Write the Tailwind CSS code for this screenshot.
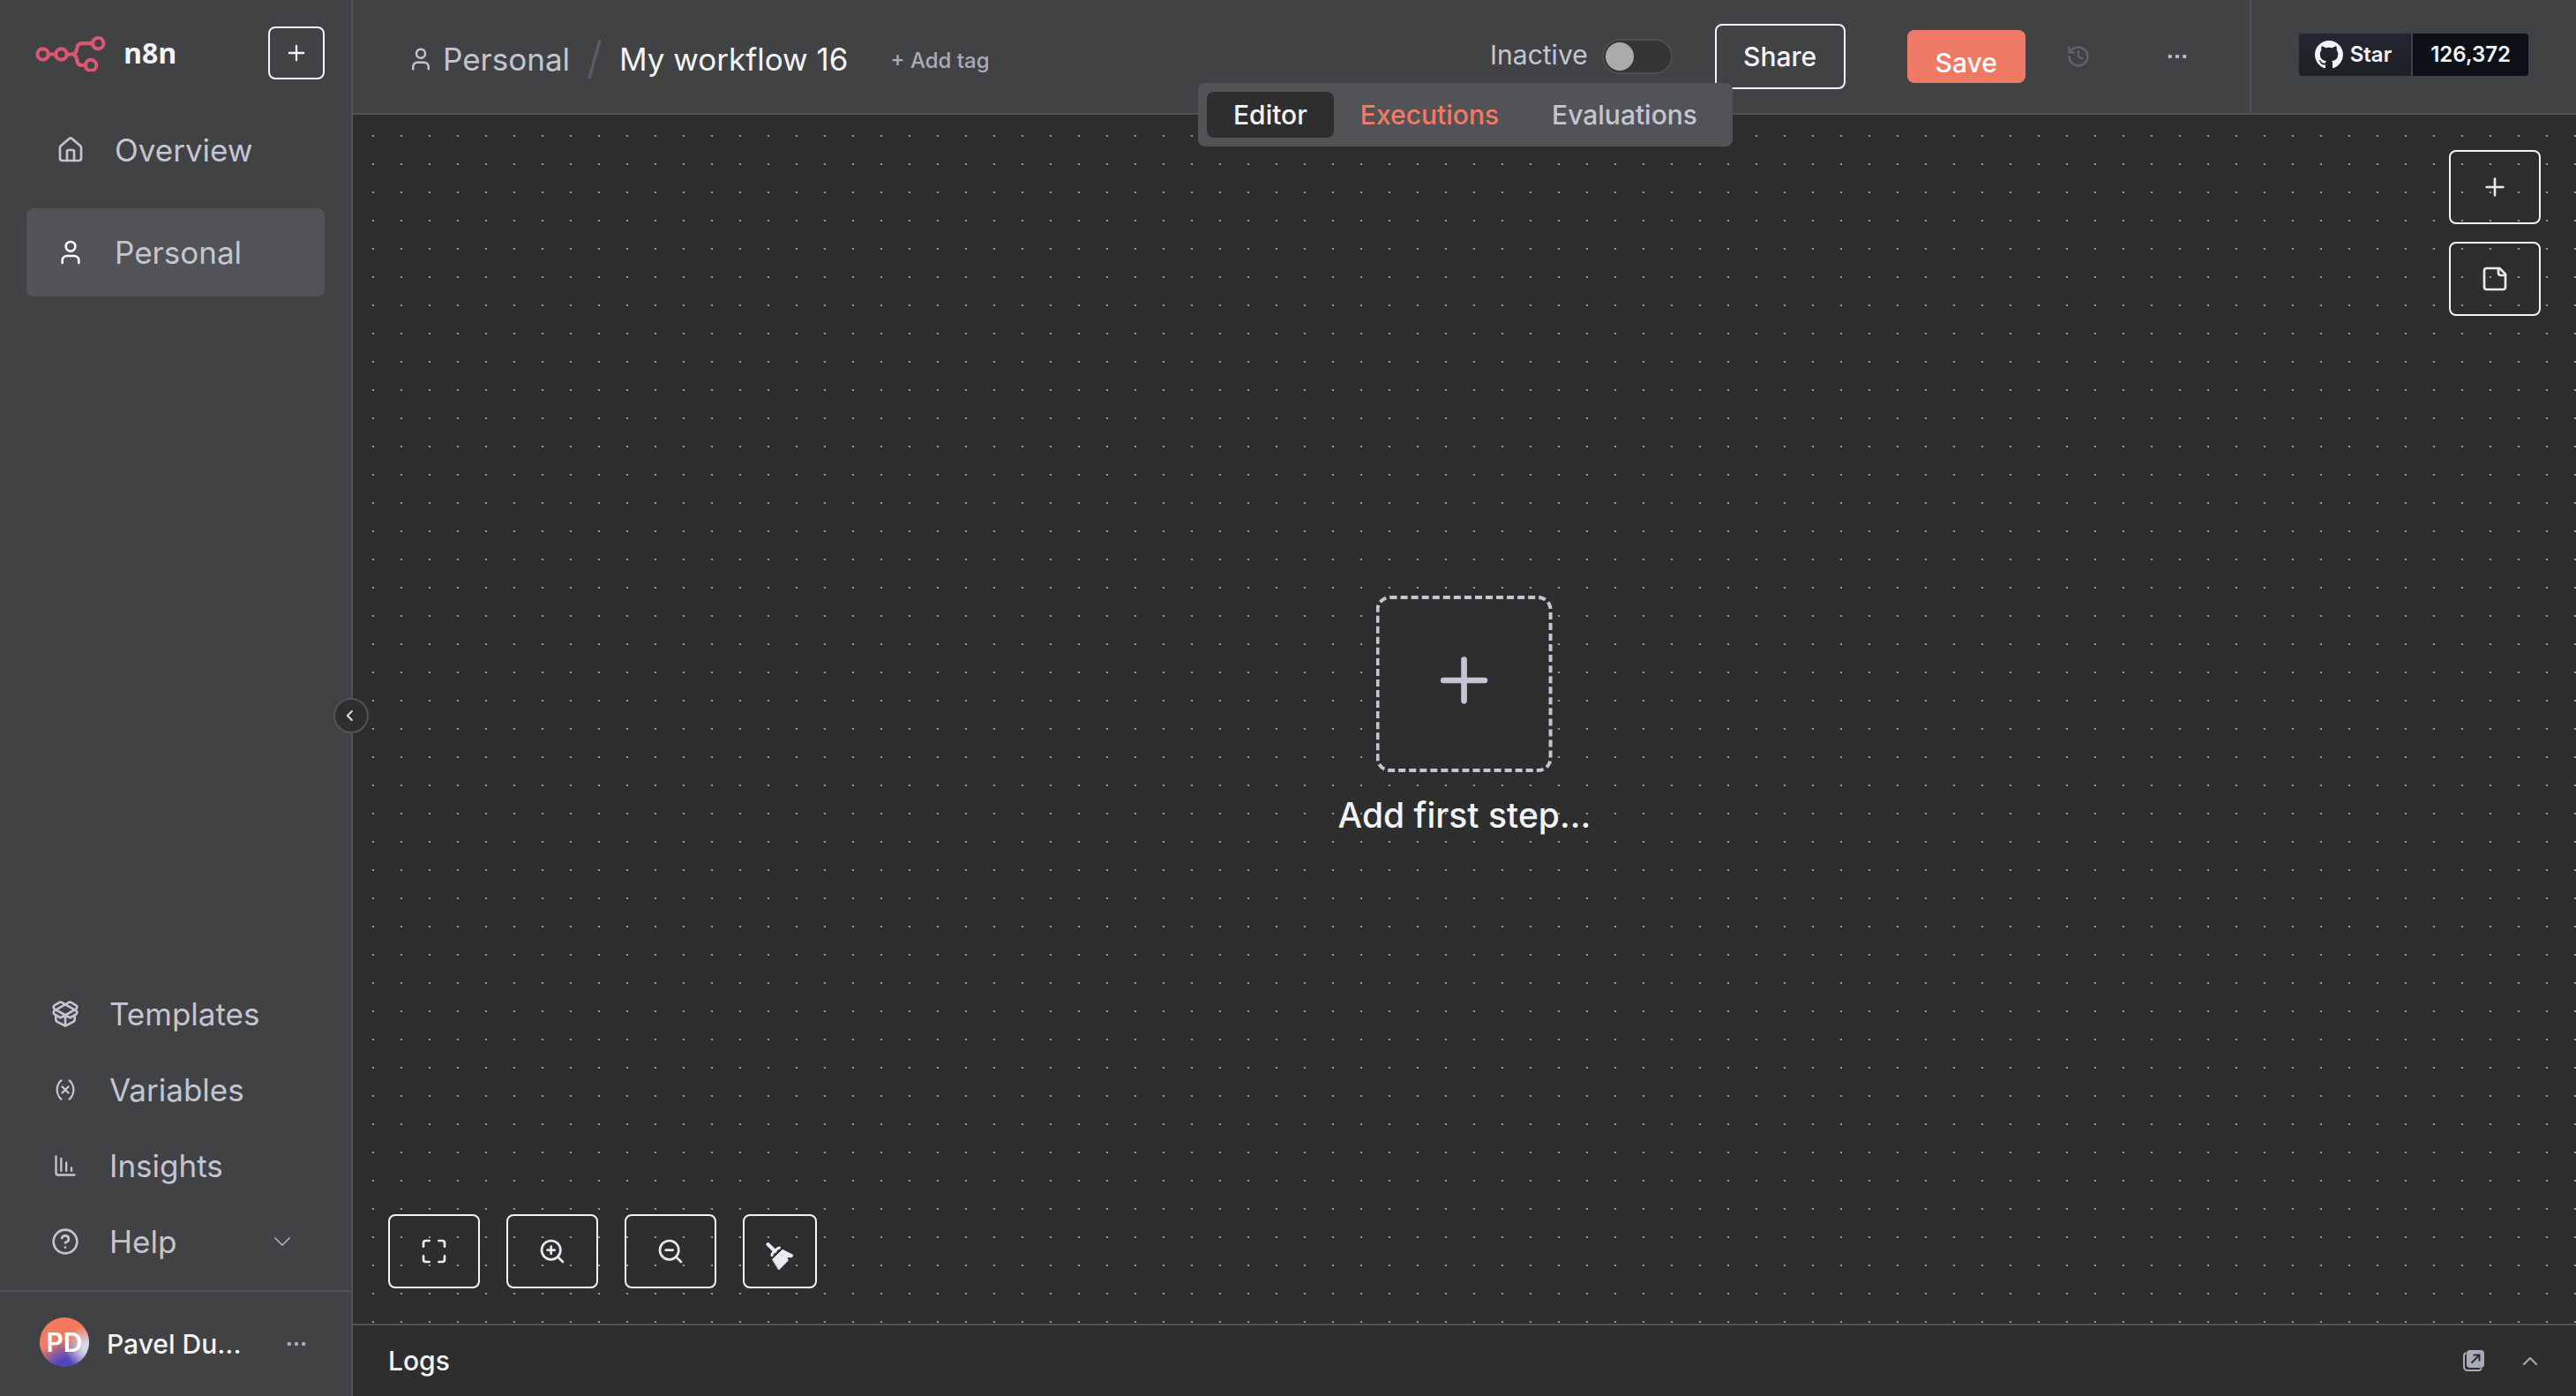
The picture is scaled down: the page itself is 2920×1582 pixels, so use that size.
<!DOCTYPE html>
<html lang="en">
<head>
    <meta charset="UTF-8">
    <meta name="viewport" content="width=device-width, initial-scale=1.0">
    <title>My workflow 16 - n8n</title>
    <script src="https://cdn.jsdelivr.net/npm/@tailwindcss/browser@4"></script>
</head>
<body class="bg-[#2e2e2e] min-h-screen flex font-['Inter',sans-serif] text-[#c3c6d2]">

    <!-- Sidebar -->
    <aside class="relative w-[400px] shrink-0 flex flex-col bg-[#414244] border-r-2 border-[#525356]">
        <div class="flex items-center justify-between pt-[30px] pl-10 pr-[30px]">
            <a href="#" class="flex items-center gap-5">
                <svg class="w-20 h-[42px]" viewBox="0 0 80 42" fill="none" stroke="#dc5674" stroke-width="4.2">
                    <circle cx="8.6" cy="22.5" r="6.2"/>
                    <circle cx="29.5" cy="22.5" r="6.2"/>
                    <circle cx="71.2" cy="10.2" r="6.2"/>
                    <circle cx="63" cy="35" r="6.2"/>
                    <path d="M14.8 22.5h8.5M35.7 22.5h5.8c3.5 0 4.8-2.5 5.3-5l.6-2.6c.6-2.7 2.3-4.7 5.6-4.7H65M41.5 22.5c3.5 0 4.8 2.5 5.3 5l.6 2.7c.6 2.8 2.4 4.8 5.6 4.8h4"/>
                </svg>
                <span class="font-['Open_Sans',sans-serif] font-bold text-[32px] leading-10 text-[#f2f4f8]">n8n</span>
            </a>
            <button type="button" aria-label="Add" class="w-16 h-[60px] flex items-center justify-center rounded-lg border-2 border-[#f2f4f8] text-[#f2f4f8]">
                <svg class="size-7" viewBox="0 0 24 24" fill="none" stroke="currentColor" stroke-width="2" stroke-linecap="round"><path d="M5 12h14M12 5v14"/></svg>
            </button>
        </div>

        <nav class="mt-[30px] px-[30px] flex flex-col gap-4 text-[35px]">
            <a href="#" class="h-[100px] flex items-center gap-[34px] pl-[34px] rounded-lg">
                <svg class="size-8" viewBox="0 0 24 24" fill="none" stroke="currentColor" stroke-width="2" stroke-linecap="round" stroke-linejoin="round"><path d="M15 21v-8a1 1 0 0 0-1-1h-4a1 1 0 0 0-1 1v8"/><path d="M3 10a2 2 0 0 1 .709-1.528l7-5.999a2 2 0 0 1 2.582 0l7 5.999A2 2 0 0 1 21 10v9a2 2 0 0 1-2 2H5a2 2 0 0 1-2-2z"/></svg>
                Overview
            </a>
            <a href="#" class="h-[100px] flex items-center gap-[34px] pl-[34px] rounded-lg bg-[#525356]">
                <svg class="size-8 text-white" viewBox="0 0 24 24" fill="none" stroke="currentColor" stroke-width="2" stroke-linecap="round" stroke-linejoin="round"><path d="M19 21v-2a4 4 0 0 0-4-4H9a4 4 0 0 0-4 4v2"/><circle cx="12" cy="7" r="4"/></svg>
                Personal
            </a>
        </nav>

        <nav class="mt-auto pb-3 pl-[58px] pr-[68px] flex flex-col text-[35px]">
            <a href="#" class="h-[86px] flex items-center gap-[34px]">
                <svg class="size-8" viewBox="0 0 24 24" fill="none" stroke="currentColor" stroke-width="2" stroke-linecap="round" stroke-linejoin="round"><path d="M12 22v-9"/><path d="M15.17 2.21a1.67 1.67 0 0 1 1.63 0L21 4.57a1.93 1.93 0 0 1 0 3.36L8.82 14.79a1.655 1.655 0 0 1-1.64 0L3 12.43a1.93 1.93 0 0 1 0-3.36z"/><path d="M20 13v3.87a2.06 2.06 0 0 1-1.11 1.83l-6 3.08a1.93 1.93 0 0 1-1.78 0l-6-3.08A2.06 2.06 0 0 1 4 16.87V13"/><path d="M21 12.43a1.93 1.93 0 0 0 0-3.36L8.83 2.2a1.64 1.64 0 0 0-1.63 0L3 4.57a1.93 1.93 0 0 0 0 3.36l12.18 6.86a1.636 1.636 0 0 0 1.63 0z"/></svg>
                Templates
            </a>
            <a href="#" class="h-[86px] flex items-center gap-[34px]">
                <span class="w-8 flex justify-center"><svg class="size-7" viewBox="0 0 24 24" fill="none" stroke="currentColor" stroke-width="2" stroke-linecap="round" stroke-linejoin="round"><path d="M8 21s-4-3-4-9 4-9 4-9M16 3s4 3 4 9-4 9-4 9M15 9l-6 6M9 9l6 6"/></svg></span>
                Variables
            </a>
            <a href="#" class="h-[86px] flex items-center gap-[34px]">
                <span class="w-8 flex justify-center"><svg class="size-7" viewBox="0 0 24 24" fill="none" stroke="currentColor" stroke-width="2" stroke-linecap="round" stroke-linejoin="round"><path d="M13 17V9M18 17v-3M3 3v16a2 2 0 0 0 2 2h16M8 17V5"/></svg></span>
                Insights
            </a>
            <a href="#" class="h-[86px] flex items-center gap-[34px]">
                <svg class="size-8" viewBox="0 0 24 24" fill="none" stroke="currentColor" stroke-width="2" stroke-linecap="round" stroke-linejoin="round"><circle cx="12" cy="12" r="10"/><path d="M9.09 9a3 3 0 0 1 5.83 1c0 2-3 3-3 3M12 17h.01"/></svg>
                Help
                <svg class="w-5 h-3 ml-auto" viewBox="0 0 20 12" fill="none" stroke="currentColor" stroke-width="1.3"><path d="M1.5 1.5 10 10l8.5-8.5"/></svg>
            </a>
        </nav>

        <div class="h-[120px] flex items-center pl-[45px] pr-12 border-t-2 border-[#525356]">
            <span class="size-14 mb-1 rounded-full flex items-center justify-center text-[30px] font-semibold text-white bg-[radial-gradient(circle_at_98%_62%,#d3dbee_8%,transparent_40%),radial-gradient(circle_at_55%_110%,#5146bd_20%,transparent_54%),linear-gradient(160deg,#f47a5f_45%,#9a6fa8_95%)]">PD</span>
            <span class="ml-5 text-[30px] font-medium text-[#f2f4f8]">Pavel Du...</span>
            <button type="button" aria-label="User menu" class="ml-auto text-[#a8acb9]">
                <svg class="size-7" viewBox="0 0 24 24" fill="currentColor"><circle cx="5" cy="12" r="2"/><circle cx="12" cy="12" r="2"/><circle cx="19" cy="12" r="2"/></svg>
            </button>
        </div>

        <!-- Collapse handle sits over the sidebar border -->
        <button type="button" aria-label="Collapse sidebar" class="absolute z-10 -right-5 top-[791px] size-10 flex items-center justify-center rounded-full bg-[#2e2e2e] border-2 border-[#525356] text-[#d9dbe4]">
            <svg class="size-5" viewBox="0 0 24 24" fill="none" stroke="currentColor" stroke-width="2.5" stroke-linecap="round" stroke-linejoin="round"><path d="m13 18-6-6 6-6"/></svg>
        </button>
    </aside>

    <div class="flex-1 min-w-0 flex flex-col">
        <!-- Header -->
        <header class="relative h-[130px] shrink-0 flex bg-[#414244] border-b-2 border-[#525356]">
            <div class="flex items-center pl-[62px] pt-1.5 text-[35px]">
                <a href="#" class="flex items-center gap-[10px]">
                    <svg class="size-[30px]" viewBox="0 0 24 24" fill="none" stroke="currentColor" stroke-width="2" stroke-linecap="round" stroke-linejoin="round"><path d="M19 21v-2a4 4 0 0 0-4-4H9a4 4 0 0 0-4 4v2"/><circle cx="12" cy="7" r="4"/></svg>
                    Personal
                </a>
                <svg class="w-4 h-11 ml-5 mr-5" viewBox="0 0 16 44" fill="none" stroke="#5a5b5e" stroke-width="3.5"><path d="M14 0 2 44"/></svg>
                <span class="text-[#f2f4f8]">My workflow 16</span>
                <button type="button" class="ml-12 pt-1 text-2xl font-medium text-[#a8acb9]">+ Add tag</button>
            </div>

            <div class="ml-auto flex items-center pr-[68px] text-[30px]">
                <label for="active" class="pb-1">Inactive</label>
                <input id="active" type="checkbox" role="switch" class="appearance-none ml-4 w-20 h-10 rounded-full bg-[#353535] border-2 border-[#4c4d4f] before:block before:size-8 before:m-[2px] before:rounded-full before:bg-[#aaabad]">
                <button type="button" class="ml-12 w-[148px] h-[74px] rounded-lg border-2 border-[#f2f4f8] font-medium text-[#f2f4f8]">Share</button>
                <button type="button" class="ml-[70px] w-[134px] h-[60px] pt-3.5 rounded-lg bg-[#ee7964] font-medium text-white">Save</button>
                <button type="button" aria-label="History" disabled class="ml-[46px] text-[#626366]">
                    <svg class="size-7" viewBox="0 0 24 24" fill="none" stroke="currentColor" stroke-width="2" stroke-linecap="round" stroke-linejoin="round"><path d="M3 12a9 9 0 1 0 9-9 9.75 9.75 0 0 0-6.74 2.74L3 8"/><path d="M3 3v5h5M12 7v5l4 2"/></svg>
                </button>
                <button type="button" aria-label="More" class="ml-[84px] text-[#b4b7c6]">
                    <svg class="size-7" viewBox="0 0 24 24" fill="currentColor"><circle cx="5" cy="12" r="2"/><circle cx="12" cy="12" r="2"/><circle cx="19" cy="12" r="2"/></svg>
                </button>
            </div>

            <div class="flex items-center pl-[52px] pr-[52px] pb-1 border-l-2 border-[#525356]">
                <div class="h-[52px] flex items-stretch rounded-md border-2 border-[#3a414a] overflow-hidden text-2xl font-semibold text-[#f0f6fc]">
                    <a href="#" class="flex items-center gap-2 pl-[18px] pr-[22px] bg-linear-to-b from-[#22262f] to-[#1d2125]">
                        <svg class="size-8" viewBox="0 0 16 16" fill="currentColor"><path d="M8 0C3.58 0 0 3.58 0 8c0 3.54 2.29 6.53 5.47 7.59.4.07.55-.17.55-.38 0-.19-.01-.82-.01-1.49-2.01.37-2.53-.49-2.69-.94-.09-.23-.48-.94-.82-1.13-.28-.15-.68-.52-.01-.53.63-.01 1.08.58 1.23.82.72 1.21 1.87.87 2.33.66.07-.52.28-.87.51-1.07-1.78-.2-3.64-.89-3.64-3.95 0-.87.31-1.59.82-2.15-.08-.2-.36-1.02.08-2.12 0 0 .67-.21 2.2.82.64-.18 1.32-.27 2-.27s1.36.09 2 .27c1.53-1.04 2.2-.82 2.2-.82.44 1.1.16 1.92.08 2.12.51.56.82 1.27.82 2.15 0 3.07-1.87 3.75-3.65 3.95.29.25.54.73.54 1.48 0 1.07-.01 1.93-.01 2.2 0 .21.15.46.55.38A8.01 8.01 0 0 0 16 8c0-4.42-3.58-8-8-8z"/></svg>
                        Star
                    </a>
                    <a href="#" class="flex items-center px-5 bg-[#0d1117] border-l-2 border-[#3a414a]">126,372</a>
                </div>
            </div>

            <!-- View tabs overlap the header edge -->
            <div class="absolute left-[958px] top-[94px] z-10 h-[72px] p-[10px] flex rounded-lg bg-[#525356] text-[30px] leading-[52px] font-medium">
                <a href="#" class="px-[30px] rounded-lg bg-[#2e2e2e] text-[#f2f4f8]">Editor</a>
                <a href="#" class="px-[30px] text-[#f17b64]">Executions</a>
                <a href="#" class="px-[30px]">Evaluations</a>
            </div>
        </header>

        <!-- Canvas -->
        <main class="flex-1 relative bg-[conic-gradient(from_270deg_at_2px_2px,#97989a_90deg,transparent_0)] bg-size-[32px_32px] bg-position-[22px_23px]">
            <button type="button" class="absolute left-1/2 top-[545px] -translate-x-1/2 flex flex-col items-center gap-5 text-[39px] font-medium text-[#f2f4f8]">
                <span class="size-[200px] pb-2 flex items-center justify-center rounded-2xl border-4 border-dashed border-[#c3c6d2] bg-[#2e2e2e] text-[#c3c6d2]">
                    <svg class="size-20" viewBox="0 0 24 24" fill="none" stroke="currentColor" stroke-width="2" stroke-linecap="round"><path d="M5 12h14M12 5v14"/></svg>
                </span>
                <span class="whitespace-nowrap">Add first step...</span>
            </button>

            <div class="absolute top-10 right-10 flex flex-col gap-5 text-[#e9ebf3]">
                <button type="button" aria-label="Add node" class="w-[104px] h-[84px] flex items-center justify-center rounded-lg border-2 border-[#f2f4f8]">
                    <svg class="size-8" viewBox="0 0 24 24" fill="none" stroke="currentColor" stroke-width="2" stroke-linecap="round"><path d="M5 12h14M12 5v14"/></svg>
                </button>
                <button type="button" aria-label="Add sticky note" class="w-[104px] h-[84px] flex items-center justify-center rounded-lg border-2 border-[#f2f4f8]">
                    <svg class="size-8" viewBox="0 0 24 24" fill="none" stroke="currentColor" stroke-width="2" stroke-linecap="round" stroke-linejoin="round"><path d="M16 3H5a2 2 0 0 0-2 2v14a2 2 0 0 0 2 2h14a2 2 0 0 0 2-2V8Z"/><path d="M15 3v4a2 2 0 0 0 2 2h4"/></svg>
                </button>
            </div>

            <div class="absolute bottom-10 left-10 flex gap-[30px] text-[#e9ebf3]">
                <button type="button" aria-label="Fit view" class="w-[104px] h-[84px] flex items-center justify-center rounded-lg border-2 border-[#f2f4f8]">
                    <svg class="size-8" viewBox="0 0 24 24" fill="none" stroke="currentColor" stroke-width="2" stroke-linecap="round" stroke-linejoin="round"><path d="M8 3H5a2 2 0 0 0-2 2v3M21 8V5a2 2 0 0 0-2-2h-3M3 16v3a2 2 0 0 0 2 2h3M16 21h3a2 2 0 0 0 2-2v-3"/></svg>
                </button>
                <button type="button" aria-label="Zoom in" class="w-[104px] h-[84px] flex items-center justify-center rounded-lg border-2 border-[#f2f4f8]">
                    <svg class="size-8" viewBox="0 0 24 24" fill="none" stroke="currentColor" stroke-width="2" stroke-linecap="round" stroke-linejoin="round"><circle cx="11" cy="11" r="8"/><path d="m21 21-4.35-4.35M11 8v6M8 11h6"/></svg>
                </button>
                <button type="button" aria-label="Zoom out" class="w-[104px] h-[84px] flex items-center justify-center rounded-lg border-2 border-[#f2f4f8]">
                    <svg class="size-8" viewBox="0 0 24 24" fill="none" stroke="currentColor" stroke-width="2" stroke-linecap="round" stroke-linejoin="round"><circle cx="11" cy="11" r="8"/><path d="m21 21-4.35-4.35M8 11h6"/></svg>
                </button>
                <button type="button" aria-label="Tidy up" class="size-[84px] pt-2 flex items-center justify-center rounded-lg border-2 border-[#f2f4f8]">
                    <svg class="size-9" viewBox="0 0 36 36" fill="currentColor" stroke="currentColor" stroke-linecap="round" stroke-linejoin="round"><path d="m4.500 6 8 8" fill="none" stroke-width="4"/><path d="M9 18.500c0-2 1-3 3.500-5s3-3 5-3.500" fill="none" stroke-width="3"/><path d="M9.800 23 21 12.300l11.800 5.900-1.200 2.700-5.500-.7 1 4.300L17 34.700z" stroke-width="1"/></svg>
                </button>
            </div>
        </main>

        <!-- Logs panel -->
        <footer class="h-[82px] shrink-0 flex items-center pl-10 pr-10 border-t-2 border-[#525356] bg-[#2e2e2e] text-[#a8acb9]">
            <h2 class="text-[30px] font-medium text-[#f2f4f8]">Logs</h2>
            <button type="button" aria-label="Pop out" class="ml-auto">
                <svg class="size-6" viewBox="0 0 24 24" fill="none"><path d="M3.5 3.2C1.8 3.8 1 5 1 6.5V19a4 4 0 0 0 4 4h12.500c1.500 0 2.700-.8 3.300-2.500" stroke="currentColor" stroke-width="2"/><rect x="4" width="20" height="20" rx="4" fill="currentColor"/><path d="M9.500 14.500 18 6M11.500 5.500h7v7" stroke="#2e2e2e" stroke-width="2"/></svg>
            </button>
            <button type="button" aria-label="Expand logs" class="ml-10">
                <svg class="size-6" viewBox="0 0 24 24" fill="none" stroke="currentColor" stroke-width="2" stroke-linecap="round" stroke-linejoin="round"><path d="m5 16 7-7 7 7"/></svg>
            </button>
        </footer>
    </div>
</body>
</html>
